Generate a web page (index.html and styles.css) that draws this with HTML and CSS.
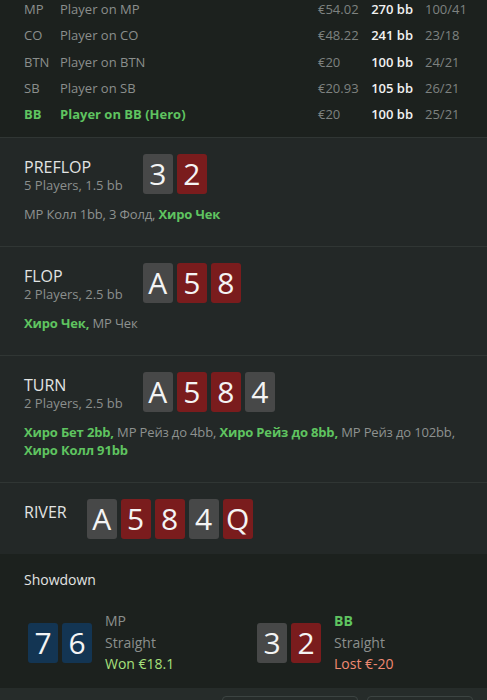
FILE: index.html
```html
<!DOCTYPE html>
<html lang="ru">
<head>
<meta charset="utf-8">
<title>Hand</title>
<link rel="stylesheet" href="styles.css">
</head>
<body>
<div class="page">
  <div class="players">
    <div class="prow"><span class="pos">MP</span><span class="name">Player on MP</span><span class="money">€54.02</span><span class="bb">270 bb</span><span class="stat">100/41</span></div>
    <div class="prow"><span class="pos">CO</span><span class="name">Player on CO</span><span class="money">€48.22</span><span class="bb">241 bb</span><span class="stat">23/18</span></div>
    <div class="prow"><span class="pos">BTN</span><span class="name">Player on BTN</span><span class="money">€20</span><span class="bb">100 bb</span><span class="stat">24/21</span></div>
    <div class="prow"><span class="pos">SB</span><span class="name">Player on SB</span><span class="money">€20.93</span><span class="bb">105 bb</span><span class="stat">26/21</span></div>
    <div class="prow hero"><span class="pos">BB</span><span class="name">Player on BB (Hero)</span><span class="money">€20</span><span class="bb">100 bb</span><span class="stat">25/21</span></div>
  </div>

  <section class="street">
    <div class="head">
      <div class="label"><div class="title">PREFLOP</div><div class="sub">5 Players, 1.5 bb</div></div>
      <div class="cards"><span class="card gray">3</span><span class="card red">2</span></div>
    </div>
    <div class="actions">MP Колл 1bb, 3 Фолд, <b class="h">Хиро Чек</b></div>
  </section>

  <section class="street">
    <div class="head">
      <div class="label"><div class="title">FLOP</div><div class="sub">2 Players, 2.5 bb</div></div>
      <div class="cards"><span class="card gray">A</span><span class="card red">5</span><span class="card red">8</span></div>
    </div>
    <div class="actions"><b class="h">Хиро Чек,</b> MP Чек</div>
  </section>

  <section class="street">
    <div class="head">
      <div class="label"><div class="title">TURN</div><div class="sub">2 Players, 2.5 bb</div></div>
      <div class="cards"><span class="card gray">A</span><span class="card red">5</span><span class="card red">8</span><span class="card gray">4</span></div>
    </div>
    <div class="actions"><b class="h">Хиро Бет 2bb,</b> MP Рейз до 4bb, <b class="h">Хиро Рейз до 8bb,</b> MP Рейз до 102bb, <b class="h">Хиро Колл 91bb</b></div>
  </section>

  <section class="street river">
    <div class="head">
      <div class="label"><div class="title">RIVER</div></div>
      <div class="cards"><span class="card gray">A</span><span class="card red">5</span><span class="card red">8</span><span class="card gray">4</span><span class="card red">Q</span></div>
    </div>
  </section>

  <section class="showdown">
    <div class="sd-title">Showdown</div>
    <div class="hands">
      <div class="hand">
        <div class="cards"><span class="card blue">7</span><span class="card blue">6</span></div>
        <div class="hinfo"><div class="who">MP</div><div class="combo">Straight</div><div class="won">Won €18.1</div></div>
      </div>
      <div class="hand">
        <div class="cards"><span class="card gray">3</span><span class="card red">2</span></div>
        <div class="hinfo"><div class="who me">BB</div><div class="combo">Straight</div><div class="lost">Lost €-20</div></div>
      </div>
    </div>
  </section>

  <div class="footer">
    <span class="btn wide"></span>
    <span class="btn"></span>
  </div>
</div>
</body>
</html>
```

FILE: styles.css
```css
* { box-sizing: border-box; }
html, body {
  margin: 0;
  padding: 0;
  background: #1c211e;
  font-family: "Open Sans", "Noto Sans", sans-serif;
  color: #d8dad9;
  overflow: hidden;
}
.page { width: 487px; }

.players {
  margin-top: -4px;
  padding: 0 24px 10px 24px;
}
.prow {
  display: grid;
  grid-template-columns: 36px 1fr 52px 43px 50px;
  height: 26.3px;
  line-height: 26.3px;
  font-size: 13px;
  color: #8b8f8d;
  white-space: nowrap;
}
.prow .bb { color: #f2f2f2; font-weight: 600; text-align: right; }
.prow .stat { padding-left: 12px; color: #7e8280; }
.prow .money { color: #7e8280; }
.prow.hero .pos, .prow.hero .name { color: #5fc460; font-weight: 700; }

.street {
  background: #232827;
  border-top: 1px solid #303634;
  padding: 16px 10px 17px 24px;
}
.street.river { padding-bottom: 15px; }
.head {
  display: flex;
  align-items: flex-start;
  gap: 20px;
}
.label { padding-top: 3px; }
.title {
  font-size: 16px;
  line-height: 20px;
  color: #e2e4e3;
}
.sub {
  font-size: 13px;
  line-height: 17px;
  color: #8b8f8d;
}
.cards { display: flex; gap: 4px; }
.card {
  width: 30px;
  height: 40px;
  border-radius: 3px;
  display: flex;
  align-items: center;
  justify-content: center;
  font-size: 30px;
  color: #f4f4f4;
  line-height: 1;
}
.card.gray { background: #474848; }
.card.red { background: #7a1c1d; }
.card.blue { background: #133553; }

.actions {
  margin-top: 11px;
  margin-bottom: 6px;
  font-size: 13px;
  line-height: 18px;
  letter-spacing: -0.15px;
  color: #8e9290;
}
.actions .h { color: #5fc460; font-weight: 700; }

.showdown {
  background: #1c211e;
  padding: 16px 0 13px 24px;
}
.sd-title {
  font-size: 14px;
  line-height: 20px;
  color: #e2e4e3;
}
.hands {
  margin-top: 20px;
  padding-left: 4px;
  display: grid;
  grid-template-columns: 229px 229px;
}
.hand {
  display: flex;
  align-items: center;
  gap: 13px;
}
.hinfo {
  font-size: 14px;
  line-height: 21.5px;
  color: #8b8f8d;
}
.who.me { color: #5fc460; font-weight: 700; }
.won { color: #a7e07c; }
.lost { color: #f08a72; }

.footer {
  background: #262c2a;
  height: 20px;
  display: flex;
  justify-content: flex-end;
  gap: 9px;
  padding: 8px 14px 0 0;
}
.btn {
  width: 106px;
  height: 24px;
  border: 1px solid #3c4442;
  border-radius: 4px;
}
.btn.wide { width: 136px; }
```
